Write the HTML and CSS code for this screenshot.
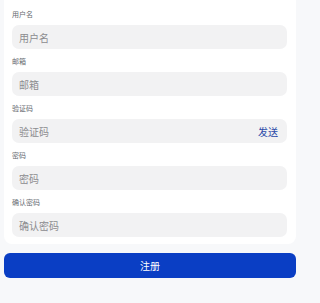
FILE: index.html
```html
<!DOCTYPE html>
<html lang="zh-CN">
<head>
<meta charset="utf-8">
<link rel="stylesheet" href="styles.css">
</head>
<body>
<div class="page">
  <form class="card">
    <div class="field">
      <label class="label">用户名</label>
      <div class="input"><span class="ph">用户名</span></div>
    </div>
    <div class="field">
      <label class="label">邮箱</label>
      <div class="input"><span class="ph">邮箱</span></div>
    </div>
    <div class="field">
      <label class="label">验证码</label>
      <div class="input"><span class="ph">验证码</span><span class="send">发送</span></div>
    </div>
    <div class="field">
      <label class="label">密码</label>
      <div class="input"><span class="ph">密码</span></div>
    </div>
    <div class="field">
      <label class="label">确认密码</label>
      <div class="input"><span class="ph">确认密码</span></div>
    </div>
  </form>
  <button class="submit" type="button">注册</button>
</div>
</body>
</html>
```
FILE: styles.css
```css
html, body {
  margin: 0;
  padding: 0;
  background: #f7f8fa;
  font-family: "Noto Sans CJK SC", "Noto Sans", sans-serif;
}
.page {
  width: 300px;
  padding: 0 4px;
  height: 303px;
  box-sizing: border-box;
}
.card {
  display: block;
  background: #ffffff;
  padding: 2px 9px 7px 8px;
  border-radius: 0 0 8px 8px;
}
.field {
  display: flex;
  flex-direction: column;
}
.label {
  margin-top: 7px;
  margin-bottom: 5px;
  height: 11px;
  line-height: 11px;
  font-size: 7px;
  color: #666a70;
}
.input {
  height: 24px;
  border-radius: 7px;
  background: #f2f2f3;
  display: flex;
  align-items: center;
  justify-content: space-between;
  padding: 0 9px 0 7px;
}
.ph {
  font-size: 10px;
  color: #8c8c8f;
}
.send {
  font-size: 10px;
  color: #2c4aa8;
}
.submit {
  display: block;
  width: 100%;
  margin-top: 9px;
  height: 25px;
  border: none;
  border-radius: 6px;
  background: #0a3ec4;
  color: #ffffff;
  font-family: "Noto Sans CJK SC", "Noto Sans", sans-serif;
  font-size: 10px;
  padding: 0;
}
```
